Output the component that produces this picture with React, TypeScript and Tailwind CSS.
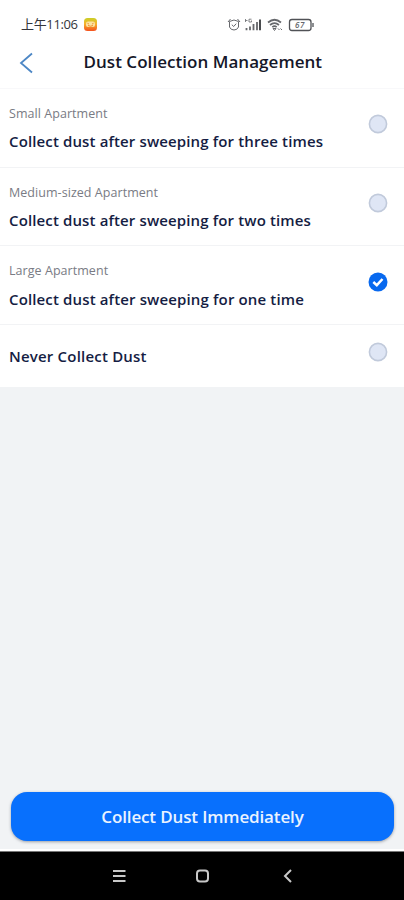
import { FunctionComponent, useState } from "react";

interface Option {
	id: string;
	label?: string;
	title: string;
	spacing: string;
}

const options: Option[] = [
	{
		id: "small",
		label: "Small Apartment",
		title: "Collect dust after sweeping for three times",
		spacing: "tracking-[0.13px]",
	},
	{
		id: "medium",
		label: "Medium-sized Apartment",
		title: "Collect dust after sweeping for two times",
		spacing: "tracking-[0.13px]",
	},
	{
		id: "large",
		label: "Large Apartment",
		title: "Collect dust after sweeping for one time",
		spacing: "tracking-[0.14px]",
	},
	{
		id: "never",
		title: "Never Collect Dust",
		spacing: "tracking-[0.2px]",
	},
];

const StatusBar = () => (
	<div className="flex h-9 items-end pl-[21px] text-[#33353b]">
		<span className="h-[23px] w-[57px] whitespace-nowrap font-['Open_Sans','Noto_Sans_CJK_SC',sans-serif] text-[13px] leading-[23px] tracking-[-0.35px]">
			上午11:06
		</span>
		<svg className="mb-[4px] ml-[5px]" width="15" height="15" viewBox="0 0 15 15" fill="none">
			<defs>
				<linearGradient id="badge" x1="0" y1="0" x2="0" y2="1">
					<stop stopColor="#c9cf27" />
					<stop offset="0.45" stopColor="#f7b32b" />
					<stop offset="1" stopColor="#f4511e" />
				</linearGradient>
			</defs>
			<rect x="1" y="1" width="13" height="13" rx="3.5" fill="url(#badge)" />
			<rect x="3" y="4.5" width="9" height="5.5" rx="2" fill="#fbe3a0" />
			<path d="M4.5 6.3l1.4.7M10.5 6.3l-1.4.7M5 8.5q2.5 1.5 5 0" stroke="#ef8d2c" />
		</svg>
		<svg className="ml-[129px]" width="88" height="22" viewBox="0 0 88 22" fill="none" stroke="#66686c">
			<path d="M2.5 7.5q4.5-3 9 0v5.5q-1.2 3-4.5 3t-4.5-3z" />
			<path d="M1 8l2.5-3M13 8l-2.5-3M4.8 10.7L6.7 12.5l2.5-2.8" />
			<path d="M18.5 5v3M18.5 6.5h2M22 5.2h2.5M22 5.2v2.8h2.5v-1.5" strokeWidth="0.8" />
			<path d="M19.5 14v2.2M23 12.5v3.7M26.5 10v6.2M30 8v8.2" strokeWidth="1.8" />
			<path d="M33 5.5v10.7" stroke="#36383c" strokeWidth="1.8" />
			<path d="M41 8.5q6.5-5.5 13 0M43 11q4.5-3.8 9 0M45.3 13.2q2.2-2 4.4 0" strokeWidth="1.7" />
			<path d="M46 14.5h3l-1.5 2zM51 14.5l1.5 1.5M53.5 14.5l1.5 1.5" />
			<rect x="62.5" y="5.5" width="21.5" height="11" rx="2.5" stroke="#505256" strokeWidth="1.3" />
			<path d="M86 9v4" strokeWidth="1.5" />
			<text x="73" y="14" textAnchor="middle" fill="#66686c" stroke="none" className="font-['Open_Sans',sans-serif] text-[8px] font-semibold italic tracking-[0.5px]">
				67
			</text>
		</svg>
	</div>
);

const Header = () => (
	<header className="flex h-[53px] items-center border-b border-[#f8f8fa]">
		<button className="ml-[19px] w-[16px] pt-px" aria-label="Back">
			<svg width="16" height="22" viewBox="0 0 16 22" fill="none" stroke="#4d87c5" strokeWidth="1.8">
				<path d="M13 1.5L2 11l11 9.5" />
			</svg>
		</button>
		<h1 className="ml-[48.5px] whitespace-nowrap text-[17px] font-semibold leading-6 tracking-[0.04px] text-[#151729]">
			Dust Collection Management
		</h1>
	</header>
);

interface RadioProps {
	checked: boolean;
}

const Radio: FunctionComponent<RadioProps> = ({ checked }) => (
	<svg className="shrink-0" width="20" height="20" viewBox="0 0 20 20" fill="none">
		{checked ? (
			<>
				<circle cx="10" cy="10" r="9.5" fill="#0869ef" />
				<path d="M5.3 10l3.5 3.2 5.7-6.2" stroke="white" strokeWidth="2.5" />
			</>
		) : (
			<circle cx="10" cy="10" r="8.6" fill="#dfe6f5" stroke="#c1cadb" strokeWidth="1.6" />
		)}
	</svg>
);

const App = () => {
	const [selected, setSelected] = useState("large");

	return (
		<div className="flex h-[900px] w-[404px] flex-col overflow-hidden bg-[#f1f3f5] font-['Open_Sans',sans-serif]">
			<div className="bg-white">
				<StatusBar />
				<Header />
				{options.map((item) => (
					<div
						key={item.id}
						className={`flex cursor-pointer justify-between pl-[9px] pr-4 ${
							item.label
								? "h-[78.7px] border-b border-[#f2f3f5] pt-[15px]"
								: "h-[62px] pt-[18px]"
						}`}
						onClick={() => setSelected(item.id)}
					>
						<div className="whitespace-nowrap">
							{item.label && (
								<p className="mb-[6.2px] text-[12.5px] leading-5 tracking-[0.05px] text-[#797b84]">
									{item.label}
								</p>
							)}
							<p
								className={`text-[15px] font-semibold leading-[22px] text-[#151d43] ${item.spacing} ${
									item.label ? "" : "mt-[2px]"
								}`}
							>
								{item.title}
							</p>
						</div>
						<div className={item.label ? "mt-[10.2px]" : "-mt-px"}>
							<Radio checked={selected === item.id} />
						</div>
					</div>
				))}
			</div>

			<div className="mt-auto border-b-2 border-white px-[11px] pb-[8px] pr-[10px]">
				<button className="h-[49px] w-full rounded-[16px] bg-[#0870fd] text-[17px] font-semibold leading-6 tracking-[-0.14px] text-[#eaf3ff] shadow-[0_1px_3px_rgba(70,75,90,0.5)]">
					Collect Dust Immediately
				</button>
			</div>

			<nav className="flex h-[49px] shrink-0 items-center border-t border-[#777777] bg-black">
				<svg width="404" height="24" viewBox="0 0 404 24" fill="none" stroke="#c8c8c8">
					<path d="M113 7h12.5M113 12h12.5M113 17h12.5" strokeWidth="1.8" />
					<rect x="197" y="6.5" width="11" height="11" rx="3" strokeWidth="2" />
					<path d="M291 6l-6 6 6 6" strokeWidth="2" />
				</svg>
			</nav>
		</div>
	);
};

export default App;
